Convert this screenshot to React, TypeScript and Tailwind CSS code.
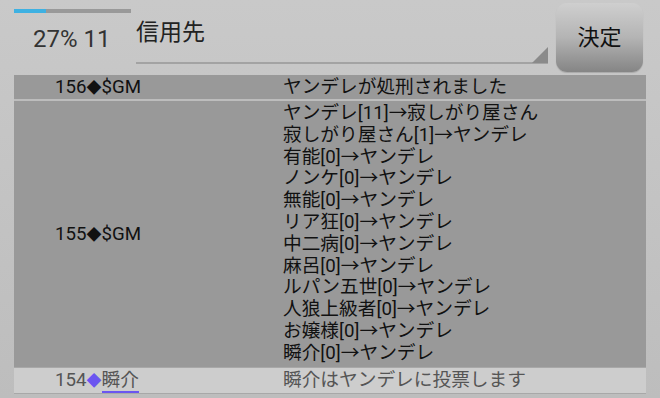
import React from "react";

const font = { fontFamily: "Roboto, 'Noto Sans CJK JP', sans-serif" };

const voteLines = [
  "ヤンデレ[11]→寂しがり屋さん",
  "寂しがり屋さん[1]→ヤンデレ",
  "有能[0]→ヤンデレ",
  "ノンケ[0]→ヤンデレ",
  "無能[0]→ヤンデレ",
  "リア狂[0]→ヤンデレ",
  "中二病[0]→ヤンデレ",
  "麻呂[0]→ヤンデレ",
  "ルパン五世[0]→ヤンデレ",
  "人狼上級者[0]→ヤンデレ",
  "お嬢様[0]→ヤンデレ",
  "瞬介[0]→ヤンデレ",
];

function Diamond({ color }: { color: string }) {
  return (
    <span className="text-[15px]" style={{ color }}>
      ◆
    </span>
  );
}

function Header() {
  return (
    <div className="flex h-[75px] pl-[14px]">
      <div className="w-[122px] shrink-0">
        <div className="mt-[9px] h-[4px] w-[117px] bg-[#999999]">
          <div className="h-full w-[32px] bg-[#3eb1e2]" />
        </div>
        <div className="mt-[12px] pl-[19px] text-[24px] leading-[28px] text-[#333333]">
          27% 11
        </div>
      </div>
      <div className="relative w-[412px] shrink-0">
        <div className="pt-[18px] text-[23px] leading-[30px] text-[#222222]">信用先</div>
        <div className="absolute left-0 right-0 top-[62px] h-[2px] bg-[#a3a3a3]" />
        <svg className="absolute right-0 top-[47px]" width="16" height="16" viewBox="0 0 16 16">
          <polygon points="16,0 16,16 0,16" fill="#8a8a8a" />
        </svg>
      </div>
      <button className="ml-[8px] mt-[3px] flex h-[69px] w-[87px] items-center justify-center rounded-[11px] bg-gradient-to-b from-[#cfcfcf] via-[#b4b4b4] to-[#858585] text-[22px] text-[#111111] shadow-[0_1px_1px_rgba(0,0,0,0.15)]">
        決定
      </button>
    </div>
  );
}

export default function App() {
  return (
    <div
      className="h-[398px] w-[660px] overflow-hidden bg-gradient-to-b from-[#c9c9c9] to-[#bdbdbd]"
      style={font}
    >
      <Header />
      <div className="mx-[14px] text-[18.7px] text-[#111111]">
        <div className="flex h-[24px] items-center bg-[#999999] leading-[24px]">
          <div className="w-[269px] shrink-0 pl-[41px]">
            156<Diamond color="#111111" />$GM
          </div>
          <div>ヤンデレが処刑されました</div>
        </div>
        <div className="h-[2px] bg-[#bdbdbd]" />
        <div className="flex items-center bg-[#999999] py-[2px]">
          <div className="w-[269px] shrink-0 pl-[41px]">
            155<Diamond color="#111111" />$GM
          </div>
          <div className="leading-[21.8px]">
            {voteLines.map(line => (
              <div key={line}>{line}</div>
            ))}
          </div>
        </div>
        <div className="flex h-[27px] items-center border-y border-[#a8a8a8] bg-[#cdcdcd] text-[#555555]">
          <div className="w-[269px] shrink-0 pl-[41px]">
            154<Diamond color="#6b55f0" />
            <span className="border-b-[2px] border-[#6b55f0]">瞬介</span>
          </div>
          <div>瞬介はヤンデレに投票します</div>
        </div>
      </div>
    </div>
  );
}
